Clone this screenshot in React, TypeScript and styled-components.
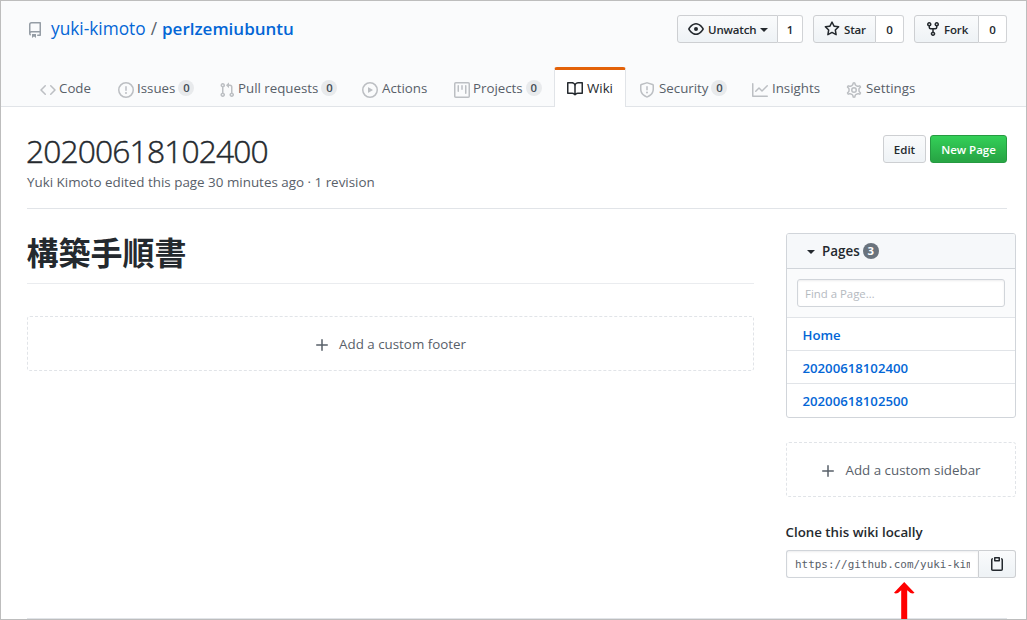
import React from "react";
import styled, { createGlobalStyle, css } from "styled-components";

const GlobalStyle = createGlobalStyle`
  *, *::before, *::after { box-sizing: border-box; }
  body {
    margin: 0;
    background: #fff;
    color: #24292e;
    font-family: "Open Sans", "Noto Sans CJK JP", sans-serif;
    font-size: 13.3px;
    line-height: 20px;
    overflow: hidden;
  }
  h1, h2, h3, p, ul { margin: 0; padding: 0; }
  a { color: inherit; text-decoration: none; }
`;

const PATHS = {
  repo: "M2 2.5A2.5 2.5 0 014.5 0h8.75a.75.75 0 01.75.75v12.5a.75.75 0 01-.75.75h-2.5a.75.75 0 110-1.5h1.75v-2h-8a1 1 0 00-.714 1.7.75.75 0 01-1.072 1.05A2.495 2.495 0 012 11.5v-9zm10.5-1V9h-8c-.356 0-.694.074-1 .208V2.5a1 1 0 011-1h8zM5 12.25v3.25a.25.25 0 00.4.2l1.45-1.087a.25.25 0 01.3 0L8.6 15.7a.25.25 0 00.4-.2v-3.25a.25.25 0 00-.25-.25h-3.5a.25.25 0 00-.25.25z",
  code: "M4.72 3.22a.75.75 0 011.06 1.06L2.06 8l3.72 3.72a.75.75 0 11-1.06 1.06L.47 8.53a.75.75 0 010-1.06l4.25-4.25zm6.56 0a.75.75 0 10-1.06 1.06L13.94 8l-3.72 3.72a.75.75 0 101.06 1.06l4.25-4.25a.75.75 0 000-1.06l-4.25-4.25z",
  issue: "M8 1.5a6.5 6.5 0 100 13 6.5 6.5 0 000-13zM0 8a8 8 0 1116 0A8 8 0 010 8zm9 3a1 1 0 11-2 0 1 1 0 012 0zm-.25-6.25a.75.75 0 00-1.5 0v3.5a.75.75 0 001.5 0v-3.5z",
  pull: "M7.177 3.073L9.573.677A.25.25 0 0110 .854v4.792a.25.25 0 01-.427.177L7.177 3.427a.25.25 0 010-.354zM3.75 2.5a.75.75 0 100 1.5.75.75 0 000-1.5zm-2.25.75a2.25 2.25 0 113 2.122v5.256a2.251 2.251 0 11-1.5 0V5.372A2.25 2.25 0 011.5 3.25zM11 2.5h-1V4h1a1 1 0 011 1v5.628a2.251 2.251 0 101.5 0V5A2.5 2.5 0 0011 2.5zm1 10.25a.75.75 0 111.5 0 .75.75 0 01-1.5 0zM3.75 12a.75.75 0 100 1.5.75.75 0 000-1.5z",
  play: "M1.5 8a6.5 6.5 0 1113 0 6.5 6.5 0 01-13 0zM8 0a8 8 0 100 16A8 8 0 008 0zM6.379 5.227A.25.25 0 006 5.442v5.117a.25.25 0 00.379.214l4.264-2.559a.25.25 0 000-.428L6.379 5.227z",
  project: "M1.75 0A1.75 1.75 0 000 1.75v12.5C0 15.216.784 16 1.75 16h12.5A1.75 1.75 0 0016 14.25V1.75A1.75 1.75 0 0014.25 0H1.75zM1.5 1.75a.25.25 0 01.25-.25h12.5a.25.25 0 01.25.25v12.5a.25.25 0 01-.25.25H1.75a.25.25 0 01-.25-.25V1.75zM11.75 3a.75.75 0 00-.75.75v7.5a.75.75 0 001.5 0v-7.5a.75.75 0 00-.75-.75zm-8.25.75a.75.75 0 011.5 0v5.5a.75.75 0 01-1.5 0v-5.5zM8 3a.75.75 0 00-.75.75v3.5a.75.75 0 001.5 0v-3.5A.75.75 0 008 3z",
  book: "M0 1.75A.75.75 0 01.75 1h4.253c1.227 0 2.317.59 3 1.501A3.744 3.744 0 0111.006 1h4.245a.75.75 0 01.75.75v10.5a.75.75 0 01-.75.75h-4.507a2.25 2.25 0 00-1.591.659l-.622.621a.75.75 0 01-1.06 0l-.622-.621A2.25 2.25 0 005.258 13H.75a.75.75 0 01-.75-.75V1.75zm8.755 3a2.25 2.25 0 012.25-2.25H14.5v9h-3.757c-.71 0-1.4.201-1.992.572l.004-7.322zm-1.504 7.324l.004-5.073-.002-2.253A2.25 2.25 0 005.003 2.5H1.5v9h3.757a3.75 3.75 0 011.994.574z",
  shield: "M7.467.133a1.75 1.75 0 011.066 0l5.25 1.68A1.75 1.75 0 0115 3.48V7c0 1.566-.32 3.182-1.303 4.682-.983 1.498-2.585 2.813-5.032 3.855a1.7 1.7 0 01-1.33 0c-2.447-1.042-4.049-2.357-5.032-3.855C1.32 10.182 1 8.566 1 7V3.48a1.75 1.75 0 011.217-1.667l5.25-1.68zm.61 1.429a.25.25 0 00-.153 0l-5.25 1.68a.25.25 0 00-.174.238V7c0 1.358.275 2.666 1.057 3.86.784 1.194 2.121 2.34 4.366 3.297a.2.2 0 00.154 0c2.245-.956 3.582-2.104 4.366-3.298C13.225 9.666 13.5 8.36 13.5 7V3.48a.25.25 0 00-.174-.237l-5.25-1.68zM9 10.5a1 1 0 11-2 0 1 1 0 012 0zm-.25-5.75a.75.75 0 10-1.5 0v3a.75.75 0 001.5 0v-3z",
  graph: "M1.5 1.75a.75.75 0 00-1.5 0v12.5c0 .414.336.75.75.75h14.5a.75.75 0 000-1.5H1.5V1.75zm14.28 2.53a.75.75 0 00-1.06-1.06L10 7.94 7.53 5.47a.75.75 0 00-1.06 0L3.22 8.72a.75.75 0 001.06 1.06L7 7.06l2.47 2.47a.75.75 0 001.06 0l5.25-5.25z",
  eye: "M1.679 7.932c.412-.621 1.242-1.75 2.366-2.717C5.175 4.242 6.527 3.5 8 3.5c1.473 0 2.824.742 3.955 1.715 1.124.967 1.954 2.096 2.366 2.717a.119.119 0 010 .136c-.412.621-1.242 1.75-2.366 2.717C10.825 11.758 9.473 12.5 8 12.5c-1.473 0-2.824-.742-3.955-1.715C2.92 9.818 2.09 8.69 1.679 8.068a.119.119 0 010-.136zM8 2c-1.981 0-3.67.992-4.933 2.078C1.797 5.169.88 6.423.43 7.1a1.619 1.619 0 000 1.798c.45.678 1.367 1.932 2.637 3.024C4.329 13.008 6.019 14 8 14c1.981 0 3.67-.992 4.933-2.078 1.27-1.091 2.187-2.345 2.637-3.023a1.619 1.619 0 000-1.798c-.45-.678-1.367-1.932-2.637-3.023C11.671 2.992 9.981 2 8 2zm0 8a2 2 0 100-4 2 2 0 000 4z",
  star: "M8 .25a.75.75 0 01.673.418l1.882 3.815 4.21.612a.75.75 0 01.416 1.279l-3.046 2.97.719 4.192a.75.75 0 01-1.088.791L8 12.347l-3.766 1.98a.75.75 0 01-1.088-.79l.72-4.194L.818 6.374a.75.75 0 01.416-1.28l4.21-.611L7.327.668A.75.75 0 018 .25zm0 2.445L6.615 5.5a.75.75 0 01-.564.41l-3.097.45 2.24 2.184a.75.75 0 01.216.664l-.528 3.084 2.769-1.456a.75.75 0 01.698 0l2.77 1.456-.53-3.084a.75.75 0 01.216-.664l2.24-2.183-3.096-.45a.75.75 0 01-.564-.41L8 2.694v.001z",
  fork: "M5 3.25a.75.75 0 11-1.5 0 .75.75 0 011.5 0zm0 2.122a2.25 2.25 0 10-1.5 0v.878A2.25 2.25 0 005.75 8.5h1.5v2.128a2.251 2.251 0 101.5 0V8.5h1.5a2.25 2.25 0 002.25-2.25v-.878a2.25 2.25 0 10-1.5 0v.878a.75.75 0 01-.75.75h-4.5A.75.75 0 015 6.25v-.878zm3.75 7.378a.75.75 0 11-1.5 0 .75.75 0 011.5 0zm3-8.75a.75.75 0 100-1.5.75.75 0 000 1.5z",
  plus: "M8 2a.75.75 0 01.75.75v4.5h4.5a.75.75 0 010 1.5h-4.5v4.5a.75.75 0 01-1.5 0v-4.5h-4.5a.75.75 0 010-1.5h4.5v-4.5A.75.75 0 018 2z",
  clipboard: "M5.75 1a.75.75 0 00-.75.75v3c0 .414.336.75.75.75h4.5a.75.75 0 00.75-.75v-3a.75.75 0 00-.75-.75h-4.5zm.75 3V2.5h3V4h-3zm-2.874-.467a.75.75 0 00-.752-1.298A1.75 1.75 0 002 3.75v9.5c0 .966.784 1.75 1.75 1.75h8.5A1.75 1.75 0 0014 13.25v-9.5a1.75 1.75 0 00-.874-1.515.75.75 0 10-.752 1.298.25.25 0 01.126.217v9.5a.25.25 0 01-.25.25h-8.5a.25.25 0 01-.25-.25v-9.5a.25.25 0 01.126-.217z",
};

const GEAR =
  "M7.429 1.525a6.593 6.593 0 011.142 0c.036.003.108.036.137.146l.289 1.105c.147.56.55.967.997 1.189.174.086.341.183.501.29.417.278.97.423 1.53.27l1.102-.303c.11-.03.175.016.195.046.219.31.41.641.573.989.014.031.022.11-.059.19l-.815.806c-.411.406-.562.957-.53 1.456a4.588 4.588 0 010 .582c-.032.499.119 1.05.53 1.456l.815.806c.08.08.073.159.059.19a6.494 6.494 0 01-.573.99c-.02.029-.086.074-.195.045l-1.103-.303c-.559-.153-1.112-.008-1.529.27-.16.107-.327.204-.5.29-.449.222-.851.628-.998 1.189l-.289 1.105c-.029.11-.101.143-.137.146a6.613 6.613 0 01-1.142 0c-.036-.003-.108-.037-.137-.146l-.289-1.105c-.147-.56-.55-.967-.997-1.189a4.502 4.502 0 01-.501-.29c-.417-.278-.97-.423-1.53-.27l-1.102.303c-.11.03-.175-.016-.195-.046a6.492 6.492 0 01-.573-.989c-.014-.031-.022-.11.059-.19l.815-.806c.411-.406.562-.957.53-1.456a4.587 4.587 0 010-.582c.032-.499-.119-1.05-.53-1.456l-.815-.806c-.08-.08-.073-.159-.059-.19a6.44 6.44 0 01.573-.99c.02-.029.086-.075.195-.045l1.103.303c.559.153 1.112.008 1.529-.27.16-.107.327-.204.5-.29.449-.222.851-.628.998-1.189l.289-1.105c.029-.11.101-.143.137-.146z";

type IconName = keyof typeof PATHS | "gear";

const Svg = styled.svg`
  flex: none;
  display: block;
  fill: currentColor;
`;

const Icon = ({ name }: { name: IconName }) => (
  <Svg width="16" height="16" viewBox="0 0 16 16" aria-hidden="true">
    {name === "gear" ? (
      <g fill="none" stroke="currentColor">
        <path d={GEAR} strokeWidth="1.35" transform="translate(8 8) scale(1.1) translate(-8 -8)" />
        <circle cx="8" cy="8" r="2.25" strokeWidth="1.5" />
      </g>
    ) : (
      <path fillRule="evenodd" d={PATHS[name]} />
    )}
  </Svg>
);

const Page = styled.div`
  position: relative;
  width: 1027px;
  height: 620px;
  border: 1px solid #bdbdbd;
  overflow: hidden;
`;

const Header = styled.header`
  display: flex;
  flex-direction: column;
  justify-content: space-between;
  height: 106px;
  padding-top: 14px;
  background: #fafbfc;
  border-bottom: 1px solid #e1e4e8;
`;

const TitleBar = styled.div`
  display: flex;
  align-items: flex-start;
  justify-content: space-between;
  padding: 0 19px 0 26px;
`;

const RepoName = styled.h1`
  display: flex;
  align-items: center;
  height: 28px;
  color: #0366d6;
  font-size: 17.3px;
  font-weight: 400;
  line-height: 28px;
  white-space: nowrap;

  svg { color: #959da5; margin: 2px 8px 0 0; }
  strong { font-weight: 600; font-size: 17px; }
`;

const Slash = styled.span`
  margin: 0 5px 0 5px;
  color: #586069;
`;

const Actions = styled.ul`
  display: flex;
  gap: 10px;
  list-style: none;
`;

const buttonFace = css`
  color: #24292e;
  background: linear-gradient(#fafbfc, #eff3f6 90%);
  border: 1px solid #cdcfd2;
`;

const ActionGroup = styled.li<{ $width: number }>`
  display: flex;
  width: ${(p) => p.$width}px;
  height: 28px;
  font-size: 11.5px;
  font-weight: 600;
  letter-spacing: -0.15px;
`;

const ActionButton = styled.a<{ $gap: number }>`
  ${buttonFace}
  flex: 1;
  display: flex;
  align-items: center;
  padding: 1px 0 0 10px;
  gap: ${(p) => p.$gap}px;
  border-radius: 3px 0 0 3px;

  svg { margin-top: -1px; }
`;

const ActionCount = styled.a<{ $width: number }>`
  width: ${(p) => p.$width}px;
  display: flex;
  align-items: center;
  justify-content: center;
  padding-top: 1px;
  background: #fff;
  border: 1px solid #d1d3d6;
  border-left: 0;
  border-radius: 0 3px 3px 0;
`;

const Caret = styled.span`
  width: 0;
  height: 0;
  border: 4px solid transparent;
  border-top-color: currentColor;
  border-bottom: 0;
`;

const Tabs = styled.nav`
  display: flex;
  height: 39px;
  margin: 0 0 -1px 26px;
`;

const Tab = styled.a<{ $width: number; $active?: boolean; $gap?: number }>`
  display: flex;
  align-items: center;
  width: ${(p) => p.$width}px;
  padding: 0 0 0 13px;
  color: #586069;
  white-space: nowrap;

  svg { color: #bcbfc3; margin: 4px ${(p) => p.$gap ?? 4}px 0 0; }

  ${(p) =>
    p.$active &&
    css`
      height: 40px;
      padding: 0 0 1px 12px;
      margin-top: -1px;
      color: #24292e;
      background: #fff;
      border: 1px solid #e1e4e8;
      border-top: 3px solid #e36209;
      border-bottom: 0;
      border-radius: 3px 3px 0 0;
      svg { color: #24292e; margin-top: 2px; }
    `}
`;

const Counter = styled.span<{ $dark?: boolean }>`
  width: 16px;
  height: 16px;
  margin-left: 3px;
  border-radius: 8px;
  font-size: 11.3px;
  font-weight: ${(p) => (p.$dark ? 700 : 600)};
  line-height: 16px;
  text-align: center;
  color: ${(p) => (p.$dark ? "#fff" : "#444d56")};
  background: ${(p) => (p.$dark ? "#6a737d" : "#e8eaec")};
`;

const Content = styled.main`
  padding: 28px 19px 0 26px;
`;

const WikiHead = styled.div`
  display: flex;
  justify-content: space-between;
  height: 74px;
  border-bottom: 1px solid #e1e4e8;
`;

const PageTitle = styled.h2`
  margin: -4px 0 0 -1px;
  font-size: 31.8px;
  font-weight: 300;
  letter-spacing: -0.88px;
  line-height: 40px;
  -webkit-text-stroke: 0.45px currentColor;
`;

const Meta = styled.p`
  margin-top: 1px;
  color: #586069;
  font-size: 13.4px;
`;

const HeadButtons = styled.div`
  display: flex;
  gap: 4px;
`;

const Button = styled.a<{ $primary?: boolean; $width: number }>`
  ${buttonFace}
  display: flex;
  align-items: center;
  justify-content: center;
  width: ${(p) => p.$width}px;
  height: 28px;
  padding-top: 1px;
  border-radius: 3px;
  font-size: 11.5px;
  font-weight: 600;
  white-space: nowrap;
  ${(p) =>
    p.$primary &&
    css`
      color: #fff;
      background: linear-gradient(#34d058, #28a745 90%);
      border-color: #269a41;
    `}
`;

const Columns = styled.div`
  display: flex;
  align-items: flex-start;
  gap: 32px;
  padding-top: 24px;
`;

const Body = styled.article`
  flex: none;
  width: 727px;
`;

const DocTitle = styled.h1`
  height: 51px;
  font-family: "Noto Sans CJK JP", sans-serif;
  font-size: 32px;
  font-weight: 700;
  line-height: 36px;
  text-indent: -0.5px;
  border-bottom: 1px solid #eaecef;
`;

const AddBox = styled.a<{ $top: number }>`
  display: flex;
  align-items: center;
  justify-content: center;
  gap: 9px;
  height: 55px;
  margin-top: ${(p) => p.$top}px;
  padding-right: 1px;
  color: #586069;
  font-size: 13.35px;
  border: 1px dashed #e1e4e8;
  border-radius: 3px;

  svg { margin-top: 2px; }
`;

const Sidebar = styled.aside`
  flex: none;
  width: 230px;
`;

const PagesBox = styled.section`
  height: 185px;
  border: 1px solid #d1d5da;
  border-radius: 3px;
  overflow: hidden;
`;

const PagesHead = styled.h3`
  display: flex;
  align-items: center;
  height: 35px;
  padding-left: 20px;
  background: #f6f8fa;
  border-bottom: 1px solid #d1d5da;
  font-size: 13.4px;
  font-weight: 600;

  ${Caret} { margin: 2px 7px 0 0; }
`;

const Filter = styled.div`
  height: 49px;
  padding: 10px;
  background: #fafbfc;
  border-bottom: 1px solid #e1e4e8;
`;

const FilterInput = styled.input`
  display: block;
  width: 208px;
  height: 28px;
  padding: 0 7px;
  border: 1px solid #d1d5da;
  border-radius: 3px;
  background: #fff;
  box-shadow: inset 0 1px 2px rgba(27, 31, 35, 0.075);
  font: 11.4px "Open Sans", sans-serif;
  &::placeholder { color: #b5babf; opacity: 1; }
`;

const PageLink = styled.a`
  display: flex;
  align-items: center;
  height: 33px;
  padding: 2px 0 0 15.5px;
  color: #0366d6;
  font-size: 13.2px;
  font-weight: 600;
  border-bottom: 1px solid #e1e4e8;
  &:last-child { border-bottom: 0; padding-top: 1px; }
`;

const CloneTitle = styled.h3`
  margin: 25px 0 8px -0.5px;
  font-size: 13.3px;
  font-weight: 600;
  line-height: 20px;
`;

const CloneRow = styled.div`
  display: flex;
  height: 28px;
`;

const CloneUrl = styled.div`
  width: 193px;
  padding: 0 8px;
  border: 1px solid #d1d5da;
  border-right-color: #cdcfd2;
  border-radius: 3px 0 0 3px;
  box-shadow: inset 0 1px 2px rgba(27, 31, 35, 0.075);
  color: #586069;
  font: 10.95px/27px "DejaVu Sans Mono", monospace;

  span { display: block; overflow: hidden; white-space: nowrap; }
`;

const CopyButton = styled.a`
  ${buttonFace}
  flex: 1;
  display: flex;
  align-items: center;
  justify-content: center;
  border-left: 0;
  border-radius: 0 3px 3px 0;
`;

const BottomRule = styled.div`
  position: absolute;
  left: 26px;
  right: 19px;
  bottom: 0;
  height: 1px;
  background: #e1e4e8;
`;

/* Annotation arrow drawn over the page, pointing at the clone URL. */
const Arrow = styled.svg`
  position: absolute;
  left: 892px;
  top: 580px;
`;

export default function App() {
  return (
    <Page>
      <GlobalStyle />
      <Header>
        <TitleBar>
          <RepoName>
            <Icon name="repo" />
            <a>yuki-kimoto</a>
            <Slash>/</Slash>
            <strong>perlzemiubuntu</strong>
          </RepoName>
          <Actions>
            <ActionGroup $width={126}>
              <ActionButton $gap={4}>
                <Icon name="eye" />
                Unwatch
                <Caret />
              </ActionButton>
              <ActionCount $width={25}>1</ActionCount>
            </ActionGroup>
            <ActionGroup $width={91}>
              <ActionButton $gap={4}>
                <Icon name="star" />
                Star
              </ActionButton>
              <ActionCount $width={28}>0</ActionCount>
            </ActionGroup>
            <ActionGroup $width={93}>
              <ActionButton $gap={3}>
                <Icon name="fork" />
                Fork
              </ActionButton>
              <ActionCount $width={28}>0</ActionCount>
            </ActionGroup>
          </Actions>
        </TitleBar>
        <Tabs>
          <Tab $width={78} $gap={3}><Icon name="code" />Code</Tab>
          <Tab $width={101} $gap={3}><Icon name="issue" />Issues<Counter>0</Counter></Tab>
          <Tab $width={143} $gap={3}><Icon name="pull" />Pull requests<Counter>0</Counter></Tab>
          <Tab $width={92}><Icon name="play" />Actions</Tab>
          <Tab $width={113} $gap={3}><Icon name="project" />Projects<Counter>0</Counter></Tab>
          <Tab $width={72} $active><Icon name="book" />Wiki</Tab>
          <Tab $width={113}><Icon name="shield" />Security<Counter>0</Counter></Tab>
          <Tab $width={94}><Icon name="graph" />Insights</Tab>
          <Tab $width={100}><Icon name="gear" />Settings</Tab>
        </Tabs>
      </Header>
      <Content>
        <WikiHead>
          <div>
            <PageTitle>20200618102400</PageTitle>
            <Meta>Yuki Kimoto edited this page 30 minutes ago · 1 revision</Meta>
          </div>
          <HeadButtons>
            <Button $width={43}>Edit</Button>
            <Button $width={77} $primary>New Page</Button>
          </HeadButtons>
        </WikiHead>
        <Columns>
          <Body>
            <DocTitle>構築手順書</DocTitle>
            <AddBox $top={32}><Icon name="plus" />Add a custom footer</AddBox>
          </Body>
          <Sidebar>
            <PagesBox>
              <PagesHead><Caret />Pages<Counter $dark>3</Counter></PagesHead>
              <Filter><FilterInput placeholder="Find a Page…" /></Filter>
              <PageLink>Home</PageLink>
              <PageLink>20200618102400</PageLink>
              <PageLink>20200618102500</PageLink>
            </PagesBox>
            <AddBox $top={24}><Icon name="plus" />Add a custom sidebar</AddBox>
            <CloneTitle>Clone this wiki locally</CloneTitle>
            <CloneRow>
              <CloneUrl><span>https://github.com/yuki-kimoto</span></CloneUrl>
              <CopyButton><Icon name="clipboard" /></CopyButton>
            </CloneRow>
          </Sidebar>
        </Columns>
      </Content>
      <BottomRule />
      <Arrow width="24" height="38" viewBox="0 0 24 38" fill="#f00">
        <path d="M11.2 1L21.5 11.8Q20 13 17.5 12L14.2 9.2V38H8.2V9.2L5 12Q2.5 13 1 11.8Z" />
      </Arrow>
    </Page>
  );
}
